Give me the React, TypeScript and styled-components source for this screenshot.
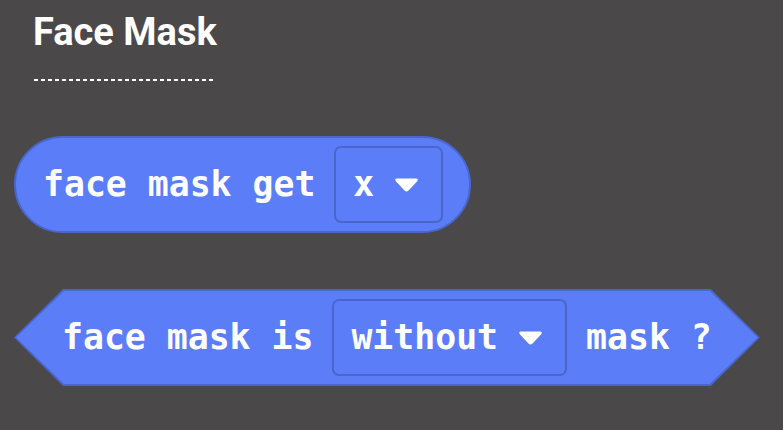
import React from "react";
import styled, { createGlobalStyle } from "styled-components";

const Global = createGlobalStyle`
  html, body { margin: 0; padding: 0; background: #4a4849; }
  body { width: 783px; height: 430px; overflow: hidden; }
`;

const Page = styled.div`
  display: flex;
  flex-direction: column;
  padding: 13px 0 0 14px;
  box-sizing: border-box;
  width: 783px;
  height: 430px;
`;

const Header = styled.div`
  display: flex;
  flex-direction: column;
  align-items: flex-start;
  margin-left: 19px;
`;

const Title = styled.h1`
  margin: 0;
  font-family: Roboto, "Noto Sans", sans-serif;
  font-weight: 700;
  font-size: 38px;
  line-height: 38px;
  color: #ffffff;
  letter-spacing: 0;
`;

const Rule = styled.div`
  margin-top: 28px;
  margin-left: 1px;
  width: 182px;
  height: 2px;
  background: repeating-linear-gradient(
    to right,
    #ffffff 0,
    #ffffff 4px,
    transparent 4px,
    transparent 7px
  );
`;

const Blocks = styled.div`
  display: flex;
  flex-direction: column;
  align-items: flex-start;
  gap: 56px;
  margin-top: 55px;
`;

const blockText = `
  font-family: "DejaVu Sans Mono", "Liberation Mono", monospace;
  font-weight: 700;
  font-size: 34.8px;
  color: #ffffff;
  white-space: pre;
`;

const Reporter = styled.div`
  display: flex;
  align-items: center;
  gap: 19px;
  box-sizing: border-box;
  height: 97px;
  padding: 0 26px 0 27px;
  background: #5b7df8;
  border: 2px solid #4a66cc;
  border-radius: 49px;
`;

const HexOuter = styled.div`
  box-sizing: border-box;
  height: 97px;
  padding: 2px;
  background: #4a66cc;
  clip-path: polygon(49px 0, calc(100% - 49px) 0, 100% 50%, calc(100% - 49px) 100%, 49px 100%, 0 50%);
`;

const HexInner = styled.div`
  display: flex;
  align-items: center;
  gap: 19px;
  height: 100%;
  padding: 0 46px 0 46px;
  background: #5b7df8;
  clip-path: polygon(48px 0, calc(100% - 48px) 0, 100% 50%, calc(100% - 48px) 100%, 48px 100%, 0 50%);
`;

const Label = styled.span`
  ${blockText}
  line-height: 1;
`;

const Dropdown = styled.div`
  display: flex;
  align-items: center;
  gap: 20px;
  box-sizing: border-box;
  height: 77px;
  padding: 0 22px 0 17px;
  background: #5b7df8;
  border: 2px solid #4a66cc;
  border-radius: 7px;
`;

const Caret = () => (
  <svg width="25" height="16" viewBox="0 0 25 16" aria-hidden="true">
    <path
      d="M3 1.5 H22 Q25 1.5 23 4.5 L14.5 13.5 Q12.5 15.5 10.5 13.5 L2 4.5 Q0 1.5 3 1.5 Z"
      fill="#ffffff"
    />
  </svg>
);

export default function App() {
  return (
    <>
      <Global />
      <Page>
        <Header>
          <Title>Face Mask</Title>
          <Rule />
        </Header>
        <Blocks>
          <Reporter>
            <Label>face mask get</Label>
            <Dropdown>
              <Label>x</Label>
              <Caret />
            </Dropdown>
          </Reporter>
          <HexOuter>
            <HexInner>
              <Label>face mask is</Label>
              <Dropdown>
                <Label>without</Label>
                <Caret />
              </Dropdown>
              <Label>mask ?</Label>
            </HexInner>
          </HexOuter>
        </Blocks>
      </Page>
    </>
  );
}
